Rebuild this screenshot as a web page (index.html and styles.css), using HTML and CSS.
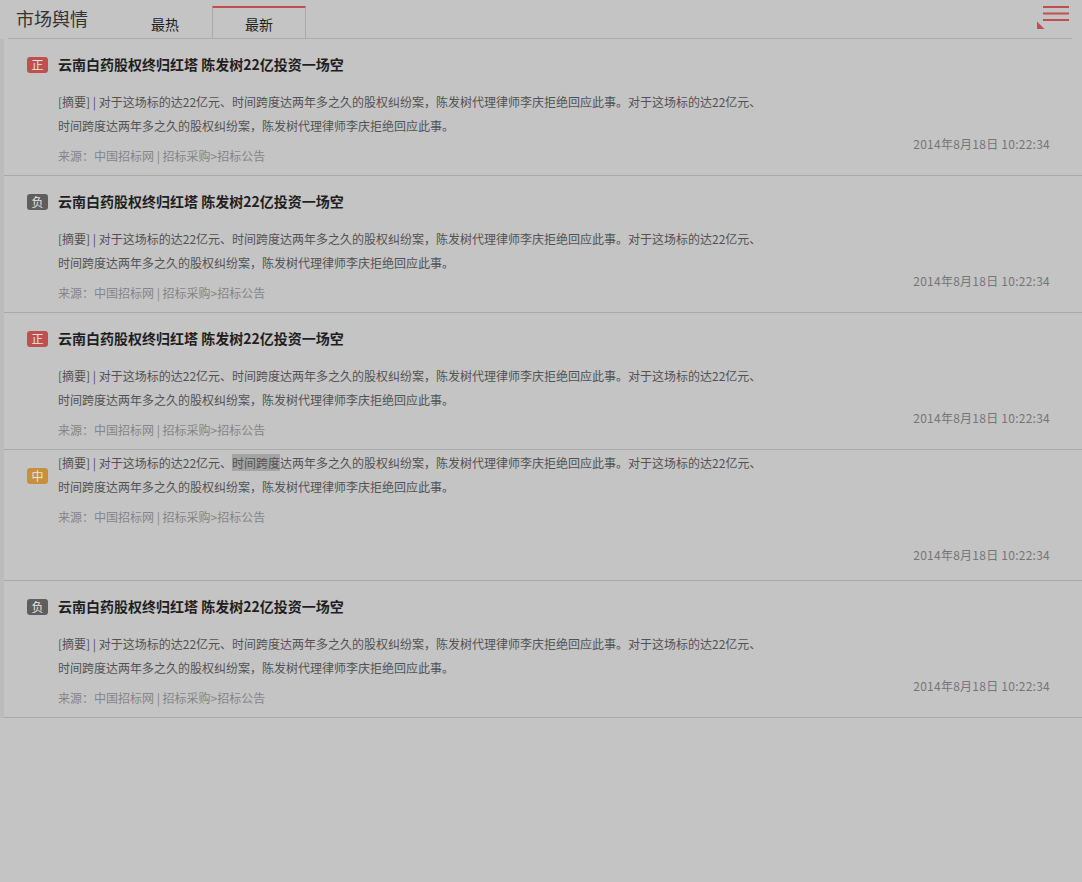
FILE: index.html
```html
<!DOCTYPE html>
<html lang="zh-CN">
<head>
<meta charset="utf-8">
<title>市场舆情</title>
<link rel="stylesheet" href="styles.css">
</head>
<body>
<div class="page">
  <header class="header">
    <h1 class="brand">市场舆情</h1>
    <nav class="tabs">
      <a class="tab">最热</a>
      <a class="tab active">最新</a>
    </nav>
    <button class="menu" aria-label="菜单">
      <svg width="38" height="30" viewBox="0 0 38 30">
        <rect x="9" y="6" width="26" height="2" fill="#c0504f"/>
        <rect x="9" y="12.5" width="26" height="2" fill="#c0504f"/>
        <rect x="9" y="19" width="26" height="2" fill="#c0504f"/>
        <polygon points="3,21.5 3,29 10.5,29" fill="#c0504f"/>
      </svg>
    </button>
  </header>

  <ul class="list">
    <li class="item">
      <div class="badge-col"><span class="badge pos">正</span></div>
      <div class="main">
        <h2 class="title">云南白药股权终归红塔 陈发树22亿投资一场空</h2>
        <p class="abstract">[摘要] | 对于这场标的达22亿元、时间跨度达两年多之久的股权纠纷案，陈发树代理律师李庆拒绝回应此事。对于这场标的达22亿元、时间跨度达两年多之久的股权纠纷案，陈发树代理律师李庆拒绝回应此事。</p>
        <p class="source">来源：中国招标网 | 招标采购&gt;招标公告</p>
      </div>
      <div class="time">2014年8月18日 10:22:34</div>
    </li>
    <li class="item">
      <div class="badge-col"><span class="badge neg">负</span></div>
      <div class="main">
        <h2 class="title">云南白药股权终归红塔 陈发树22亿投资一场空</h2>
        <p class="abstract">[摘要] | 对于这场标的达22亿元、时间跨度达两年多之久的股权纠纷案，陈发树代理律师李庆拒绝回应此事。对于这场标的达22亿元、时间跨度达两年多之久的股权纠纷案，陈发树代理律师李庆拒绝回应此事。</p>
        <p class="source">来源：中国招标网 | 招标采购&gt;招标公告</p>
      </div>
      <div class="time">2014年8月18日 10:22:34</div>
    </li>
    <li class="item">
      <div class="badge-col"><span class="badge pos">正</span></div>
      <div class="main">
        <h2 class="title">云南白药股权终归红塔 陈发树22亿投资一场空</h2>
        <p class="abstract">[摘要] | 对于这场标的达22亿元、时间跨度达两年多之久的股权纠纷案，陈发树代理律师李庆拒绝回应此事。对于这场标的达22亿元、时间跨度达两年多之久的股权纠纷案，陈发树代理律师李庆拒绝回应此事。</p>
        <p class="source">来源：中国招标网 | 招标采购&gt;招标公告</p>
      </div>
      <div class="time">2014年8月18日 10:22:34</div>
    </li>
    <li class="item">
      <div class="badge-col"><span class="badge mid">中</span></div>
      <div class="main">
        <p class="abstract">[摘要] | 对于这场标的达22亿元、<span class="hl">时间跨度</span>达两年多之久的股权纠纷案，陈发树代理律师李庆拒绝回应此事。对于这场标的达22亿元、时间跨度达两年多之久的股权纠纷案，陈发树代理律师李庆拒绝回应此事。</p>
        <p class="source">来源：中国招标网 | 招标采购&gt;招标公告</p>
      </div>
      <div class="time">2014年8月18日 10:22:34</div>
    </li>
    <li class="item">
      <div class="badge-col"><span class="badge neg">负</span></div>
      <div class="main">
        <h2 class="title">云南白药股权终归红塔 陈发树22亿投资一场空</h2>
        <p class="abstract">[摘要] | 对于这场标的达22亿元、时间跨度达两年多之久的股权纠纷案，陈发树代理律师李庆拒绝回应此事。对于这场标的达22亿元、时间跨度达两年多之久的股权纠纷案，陈发树代理律师李庆拒绝回应此事。</p>
        <p class="source">来源：中国招标网 | 招标采购&gt;招标公告</p>
      </div>
      <div class="time">2014年8月18日 10:22:34</div>
    </li>
  </ul>
</div>
</body>
</html>
```
FILE: styles.css
```css
* { box-sizing: border-box; }
html, body {
  margin: 0;
  padding: 0;
  background: #c4c4c4;
  font-family: "Noto Sans CJK SC", "Microsoft YaHei", sans-serif;
  color: #222;
}
.page {
  width: 1082px;
  min-height: 882px;
  background: #c4c4c4;
}
.header {
  display: flex;
  align-items: stretch;
  height: 39px;
  margin: 0 10px 0 8px;
  border-bottom: 1px solid #ababab;
}
.brand {
  margin: 0;
  padding-left: 8px;
  width: 110px;
  font-size: 18px;
  font-weight: normal;
  line-height: 38px;
  color: #333;
  position: relative;
  top: -1px;
}
.tabs {
  display: flex;
  padding-top: 6px;
}
.tab {
  display: block;
  width: 94px;
  text-align: center;
  font-size: 14px;
  line-height: 30px;
  padding-top: 1px;
  color: #1e1e1e;
  border-top: 2px solid transparent;
  border-left: 1px solid transparent;
  border-right: 1px solid transparent;
}
.tab.active {
  border-top-color: #c0504f;
  border-left-color: #aaaaaa;
  border-right-color: #aaaaaa;
}
.menu {
  margin-left: auto;
  padding: 0;
  border: 0;
  background: none;
  width: 38px;
  height: 30px;
}
.menu svg { display: block; }

.list {
  list-style: none;
  margin: 0;
  padding: 0;
  border-left: 4px solid #bbbbbb;
}
.item {
  display: flex;
  min-height: 131px;
  border-bottom: 1px solid #a9a9a9;
}
.badge-col {
  width: 54px;
  padding-left: 23px;
  padding-top: 18px;
  flex: none;
}
.badge {
  display: block;
  width: 21px;
  height: 16px;
  border-radius: 3px;
  font-size: 12px;
  line-height: 16px;
  text-align: center;
  color: #e8e4e0;
}
.badge.pos { background: #c0504f; }
.badge.neg { background: #5e5e5e; }
.badge.mid { background: #c8903a; }

.main {
  width: 708px;
  flex: none;
  padding-top: 1px;
  padding-bottom: 7px;
}
.title {
  margin: 14px 0 16px;
  font-size: 14px;
  font-weight: bold;
  line-height: 20px;
  color: #1f1f1f;
}
.abstract {
  margin: 0;
  font-size: 12px;
  line-height: 24px;
  color: #525252;
}
.hl {
  background: #a4a4a4;
}
.source {
  margin: 6px 0 0;
  font-size: 12px;
  line-height: 24px;
  color: #858585;
}
.time {
  margin-left: auto;
  padding-right: 32px;
  padding-top: 95px;
  font-size: 12px;
  line-height: 20px;
  letter-spacing: 0.25px;
  color: #767676;
  white-space: nowrap;
}
```
